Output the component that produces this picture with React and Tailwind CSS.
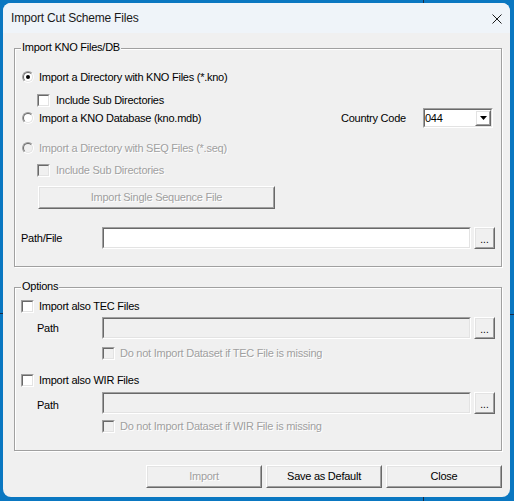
import React from "react";

const dis = "text-[#a0a0a0] [text-shadow:1px_1px_0_#fff]";

function Check({ disabled }) {
  return (
    <span className="block w-[13px] h-[13px] shrink-0 border border-t-[#a0a0a0] border-l-[#a0a0a0] border-r-white border-b-white">
      <span
        className={`block w-full h-full border border-t-[#696969] border-l-[#696969] border-r-[#e3e3e3] border-b-[#e3e3e3] ${
          disabled ? "bg-[#f0f0f0]" : "bg-white"
        }`}
      />
    </span>
  );
}

function Radio({ checked, disabled }) {
  return (
    <span className="block w-[12px] h-[12px] shrink-0 rounded-full border border-t-[#a0a0a0] border-l-[#a0a0a0] border-r-white border-b-white">
      <span
        className={`flex items-center justify-center w-full h-full rounded-full border border-t-[#696969] border-l-[#696969] border-r-[#e3e3e3] border-b-[#e3e3e3] ${
          disabled ? "bg-[#f0f0f0]" : "bg-white"
        }`}
      >
        {checked && <span className="block w-[4px] h-[4px] rounded-full bg-black" />}
      </span>
    </span>
  );
}

function Btn({ children, className, disabled }) {
  return (
    <div className={`shrink-0 border border-t-white border-l-white border-r-[#696969] border-b-[#696969] ${className}`}>
      <div
        className={`h-full flex items-center justify-center border border-t-[#e3e3e3] border-l-[#e3e3e3] border-r-[#a0a0a0] border-b-[#a0a0a0] ${
          disabled ? dis : "text-black"
        }`}
      >
        {children}
      </div>
    </div>
  );
}

function Field({ className, disabled, children }) {
  return (
    <div className={`border border-t-[#a0a0a0] border-l-[#a0a0a0] border-r-white border-b-white ${className}`}>
      <div
        className={`h-full flex items-center border border-t-[#696969] border-l-[#696969] border-r-[#e3e3e3] border-b-[#e3e3e3] ${
          disabled ? "bg-[#f0f0f0]" : "bg-white"
        }`}
      >
        {children}
      </div>
    </div>
  );
}

function Dots() {
  return (
    <Btn className="w-[21px] h-[22px]">
      <span className="pt-[3px] text-[10px] tracking-[0px]">...</span>
    </Btn>
  );
}

function Group({ label, className, children }) {
  return (
    <div className={`relative border border-[#a0a0a0] shadow-[inset_1px_1px_0_#fff,1px_1px_0_#fff] ${className}`}>
      <span className="absolute left-[6px] -top-[8px] bg-[#f0f0f0] px-[1px] leading-[13px]">{label}</span>
      {children}
    </div>
  );
}

export default function App() {
  return (
    <div className="relative w-[514px] h-[501px] overflow-hidden bg-[#0a77c1] pt-[3px] pl-[3px] font-['Liberation_Sans',Arial,sans-serif] text-[11px] tracking-[-0.25px] leading-[13px] text-black">
      {/* desktop bits peeking around the window */}
      <div className="absolute left-[423px] top-0 w-px h-[3px] bg-[#1b2b44]" />
      <div className="absolute left-[423px] top-[497px] w-px h-[4px] bg-[#1b2b44]" />
      <div className="absolute left-0 top-[313px] w-[3px] h-px bg-[#1b2b44]" />
      <div className="absolute left-[510px] top-[314px] w-[4px] h-px bg-[#1b2b44]" />

      <div className="w-[507px] h-[494px] rounded-[8px] overflow-hidden bg-[#f0f0f0] flex flex-col">
        {/* Title bar */}
        <div className="h-[30px] shrink-0 bg-[#eff4f9] flex items-center justify-between pl-[8px] pr-[8px]">
          <span className="text-[12px] tracking-[-0.2px] text-[#1a1a1a]">Import Cut Scheme Files</span>
          <svg width="10" height="10" viewBox="0 0 10 10" className="mt-[1px]">
            <path d="M0.5 0.5L9.5 9.5M9.5 0.5L0.5 9.5" stroke="#1a1a1a" strokeWidth="1" />
          </svg>
        </div>

        {/* Body */}
        <div className="flex flex-col pl-[11px] pr-[8px]">
          <Group label="Import KNO Files/DB" className="mt-[15px] h-[219px] pt-[20px] pl-[7px] pr-[6px]">
            <div className="h-[16px] flex items-center gap-[5px]">
              <Radio checked />
              <span>Import a Directory with KNO Files (*.kno)</span>
            </div>
            <div className="mt-[7px] h-[16px] flex items-center gap-[6px] pl-[15px]">
              <Check />
              <span>Include Sub Directories</span>
            </div>
            <div className="h-[20px] flex items-center gap-[5px]">
              <Radio />
              <span>Import a KNO Database (kno.mdb)</span>
              <div className="ml-auto mr-[2px] flex items-center">
                <span className="w-[82px]">Country Code</span>
                <Field className="w-[70px] h-[20px]">
                  <span className="flex-1">044</span>
                  <Btn className="w-[16px] h-[16px]">
                    <svg width="7" height="4" viewBox="0 0 7 4">
                      <path d="M0 0H7L3.5 4Z" fill="#000" />
                    </svg>
                  </Btn>
                </Field>
              </div>
            </div>
            <div className="mt-[12px] h-[16px] flex items-center gap-[5px]">
              <Radio disabled />
              <span className={dis}>Import a Directory with SEQ Files (*.seq)</span>
            </div>
            <div className="mt-[6px] h-[16px] flex items-center gap-[6px] pl-[15px]">
              <Check disabled />
              <span className={dis}>Include Sub Directories</span>
            </div>
            <Btn disabled className="mt-[8px] ml-[16px] w-[237px] h-[23px]">
              Import Single Sequence File
            </Btn>
            <div className="mt-[18px] h-[22px] flex items-center -ml-[1px]">
              <span className="w-[81px]">Path/File</span>
              <Field className="flex-1 h-[22px]" />
              <div className="ml-[3px]">
                <Dots />
              </div>
            </div>
          </Group>

          <Group label="Options" className="mt-[20px] h-[164px] pt-[10px] pl-[6px] pr-[6px]">
            <div className="h-[16px] flex items-center gap-[5px]">
              <Check />
              <span>Import also TEC Files</span>
            </div>
            <div className="mt-[3px] h-[22px] flex items-center pl-[16px]">
              <span className="w-[65px] pt-[1px]">Path</span>
              <Field disabled className="flex-1 h-[22px]" />
              <div className="ml-[3px]">
                <Dots />
              </div>
            </div>
            <div className="mt-[6px] h-[16px] flex items-center gap-[5px] pl-[81px]">
              <Check disabled />
              <span className={dis}>Do not Import Dataset if TEC File is missing</span>
            </div>
            <div className="mt-[11px] h-[16px] flex items-center gap-[5px]">
              <Check />
              <span>Import also WIR Files</span>
            </div>
            <div className="mt-[4px] h-[22px] flex items-center pl-[16px]">
              <span className="w-[65px] pt-[4px]">Path</span>
              <Field disabled className="flex-1 h-[22px]" />
              <div className="ml-[3px]">
                <Dots />
              </div>
            </div>
            <div className="mt-[4px] h-[16px] flex items-center gap-[5px] pl-[81px]">
              <Check disabled />
              <span className={dis}>Do not Import Dataset if WIR File is missing</span>
            </div>
          </Group>

          <div className="mt-[14px] flex justify-end gap-[4px]">
            <Btn disabled className="w-[116px] h-[23px]">
              Import
            </Btn>
            <Btn className="w-[116px] h-[23px]">Save as Default</Btn>
            <Btn className="w-[116px] h-[23px]">Close</Btn>
          </div>
        </div>
      </div>
    </div>
  );
}
